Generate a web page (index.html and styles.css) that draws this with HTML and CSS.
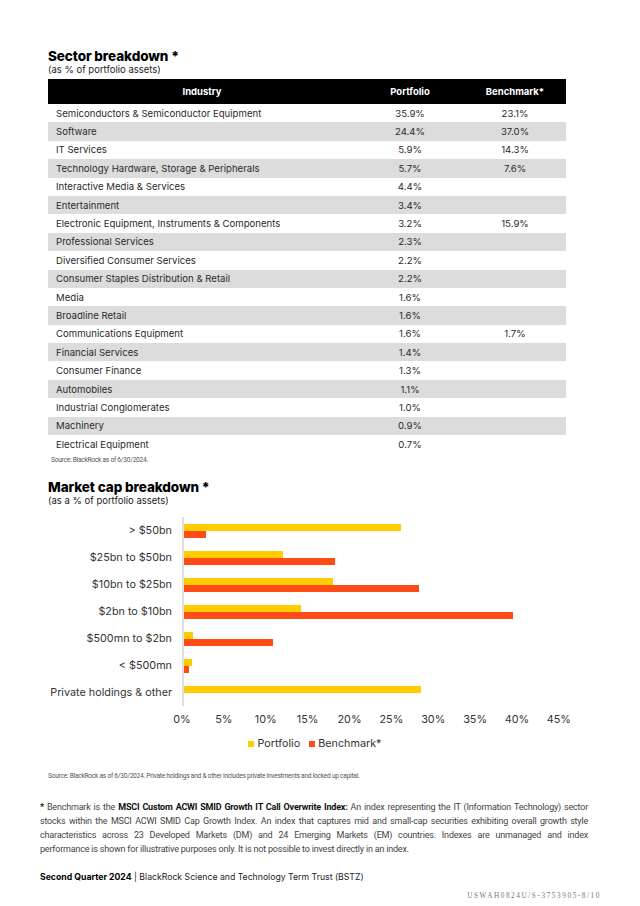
FILE: index.html
```html
<!DOCTYPE html>
<html>
<head>
<meta charset="utf-8">
<link rel="stylesheet" href="styles.css">
</head>
<body>
<div class="page">
  <h2 class="title">Sector breakdown *</h2>
  <div class="subtitle">(as % of portfolio assets)</div>
  <table class="sector">
    <thead>
      <tr><th class="c-ind">Industry</th><th class="c-val">Portfolio</th><th class="c-val">Benchmark*</th></tr>
    </thead>
    <tbody>
      <tr><td class="c-ind">Semiconductors &amp; Semiconductor Equipment</td><td>35.9%</td><td>23.1%</td></tr>
      <tr><td class="c-ind">Software</td><td>24.4%</td><td>37.0%</td></tr>
      <tr><td class="c-ind">IT Services</td><td>5.9%</td><td>14.3%</td></tr>
      <tr><td class="c-ind">Technology Hardware, Storage &amp; Peripherals</td><td>5.7%</td><td>7.6%</td></tr>
      <tr><td class="c-ind">Interactive Media &amp; Services</td><td>4.4%</td><td></td></tr>
      <tr><td class="c-ind">Entertainment</td><td>3.4%</td><td></td></tr>
      <tr><td class="c-ind">Electronic Equipment, Instruments &amp; Components</td><td>3.2%</td><td>15.9%</td></tr>
      <tr><td class="c-ind">Professional Services</td><td>2.3%</td><td></td></tr>
      <tr><td class="c-ind">Diversified Consumer Services</td><td>2.2%</td><td></td></tr>
      <tr><td class="c-ind">Consumer Staples Distribution &amp; Retail</td><td>2.2%</td><td></td></tr>
      <tr><td class="c-ind">Media</td><td>1.6%</td><td></td></tr>
      <tr><td class="c-ind">Broadline Retail</td><td>1.6%</td><td></td></tr>
      <tr><td class="c-ind">Communications Equipment</td><td>1.6%</td><td>1.7%</td></tr>
      <tr><td class="c-ind">Financial Services</td><td>1.4%</td><td></td></tr>
      <tr><td class="c-ind">Consumer Finance</td><td>1.3%</td><td></td></tr>
      <tr><td class="c-ind">Automobiles</td><td>1.1%</td><td></td></tr>
      <tr><td class="c-ind">Industrial Conglomerates</td><td>1.0%</td><td></td></tr>
      <tr><td class="c-ind">Machinery</td><td>0.9%</td><td></td></tr>
      <tr><td class="c-ind">Electrical Equipment</td><td>0.7%</td><td></td></tr>
    </tbody>
  </table>
  <div class="source src1">Source: BlackRock as of 6/30/2024.</div>

  <h2 class="title title2">Market cap breakdown *</h2>
  <div class="subtitle">(as a % of portfolio assets)</div>

  <div class="chart">
    <div class="labels">
      <div class="lab">&gt; $50bn</div>
      <div class="lab">$25bn to $50bn</div>
      <div class="lab">$10bn to $25bn</div>
      <div class="lab">$2bn to $10bn</div>
      <div class="lab">$500mn to $2bn</div>
      <div class="lab">&lt; $500mn</div>
      <div class="lab">Private holdings &amp; other</div>
    </div>
    <div class="plot">
      <div class="grp"><div class="bar y" style="width:57.8%"></div><div class="bar r" style="width:5.8%"></div></div>
      <div class="grp"><div class="bar y" style="width:26.5%"></div><div class="bar r" style="width:40.2%"></div></div>
      <div class="grp"><div class="bar y" style="width:39.8%"></div><div class="bar r" style="width:62.7%"></div></div>
      <div class="grp"><div class="bar y" style="width:31.1%"></div><div class="bar r" style="width:87.8%"></div></div>
      <div class="grp"><div class="bar y" style="width:2.4%"></div><div class="bar r" style="width:23.8%"></div></div>
      <div class="grp"><div class="bar y" style="width:2.2%"></div><div class="bar r" style="width:1.3%"></div></div>
      <div class="grp"><div class="bar y" style="width:63.1%"></div><div class="bar r" style="width:0"></div></div>
    </div>
  </div>
  <div class="ticks">
    <span>0%</span><span>5%</span><span>10%</span><span>15%</span><span>20%</span><span>25%</span><span>30%</span><span>35%</span><span>40%</span><span>45%</span>
  </div>
  <div class="legend">
    <span class="key"><i class="sw y"></i>Portfolio</span>
    <span class="key"><i class="sw r"></i>Benchmark*</span>
  </div>
  <div class="source src2">Source: BlackRock as of 6/30/2024. Private holdings and &amp; other includes private investments and locked up capital.</div>

  <p class="note"><b>*</b> Benchmark is the <b>MSCI Custom ACWI SMID Growth IT Call Overwrite Index:</b> An index representing the IT (Information Technology) sector stocks within the MSCI ACWI SMID Cap Growth Index. An index that captures mid and small-cap securities exhibiting overall growth style characteristics across 23 Developed Markets (DM) and 24 Emerging Markets (EM) countries. Indexes are unmanaged and index performance&nbsp;is&nbsp;shown&nbsp;for illustrative purposes only. It is not possible to invest directly in an index.</p>

  <div class="footer"><b>Second Quarter 2024</b> | BlackRock Science and Technology Term Trust (BSTZ)</div>
  <div class="code">USWAH0824U/S-3753905-8/10</div>
</div>
</body>
</html>
```

FILE: styles.css
```css
* { box-sizing: border-box; }
html, body { margin: 0; padding: 0; background: #fff; }
body { font-family: "Inter", "Roboto", "Liberation Sans", sans-serif; color: #222; }
.page { width: 640px; height: 906px; padding: 48px 74px 0 48px; }

.title { margin: 0; font-size: 13.5px; line-height: 16px; font-weight: 800; color: #000; letter-spacing: -0.1px; }
.subtitle { font-size: 9.5px; line-height: 12px; color: #222; }

.sector { border-collapse: collapse; width: 518px; margin-top: 3px; font-size: 9.6px; color: #2a2a2a; }
.sector th { background: #000; color: #fff; font-weight: 700; height: 25px; padding: 0; text-align: center; font-size: 9.5px; }
.sector td { height: 18.4px; padding: 0; text-align: center; }
.sector tbody tr:nth-child(even) td { background: #dcdcdc; }
.sector .c-ind { width: 308px; }
.sector td.c-ind { text-align: left; padding-left: 8px; }
.sector th.c-val:nth-child(2) { width: 108px; }

.source { font-family: "Roboto", "Liberation Sans", sans-serif; font-size: 6.6px; color: #555; letter-spacing: -0.25px; line-height: 10px; }
.src1 { margin-top: 2px; padding-left: 3px; }
.title2 { margin-top: 14px; }

.chart { display: flex; margin-top: 10px; }
.labels { width: 124px; margin-right: 10px; display: flex; flex-direction: column; }
.lab { height: 27px; display: flex; align-items: center; justify-content: flex-end; font-size: 10.8px; color: #333; white-space: nowrap; }
.plot { width: 377px; border-left: 2px solid #e0e0e0; display: flex; flex-direction: column; }
.grp { height: 27px; display: flex; flex-direction: column; justify-content: center; }
.bar { height: 7px; }
.bar.y { background: #ffcc00; }
.bar.r { background: #ff4c17; }

.ticks { display: flex; justify-content: space-between; width: 377px; margin-left: 134px; height: 14px; align-items: center; margin-top: 6px; }
.ticks span { width: 0; display: flex; justify-content: center; font-size: 10.8px; color: #333; white-space: nowrap; }

.legend { display: flex; justify-content: center; gap: 9px; margin-top: 11px; padding-left: 16px; font-size: 10.8px; color: #333; line-height: 13px; }
.key { display: flex; align-items: center; }
.sw { display: inline-block; width: 6px; height: 6px; margin-right: 3px; }
.sw.y { background: #ffcc00; }
.sw.r { background: #ff4c17; }

.src2 { margin-top: 21px; }

.note { margin: 19px 0 0 -8px; width: 548px; font-family: "Roboto", "Liberation Sans", sans-serif; font-size: 9px; line-height: 14px; color: #444; text-align: justify; letter-spacing: -0.2px; }
.note b { color: #111; font-weight: 700; }

.footer { margin-top: 15px; margin-left: -8px; font-size: 8.7px; color: #222; line-height: 12px; }
.footer b { color: #000; font-weight: 700; }
.code { font-family: "Liberation Serif", serif; font-size: 7.2px; letter-spacing: 1.6px; color: #777; text-align: right; margin-right: -35px; margin-top: 8px; line-height: 10px; }
```
